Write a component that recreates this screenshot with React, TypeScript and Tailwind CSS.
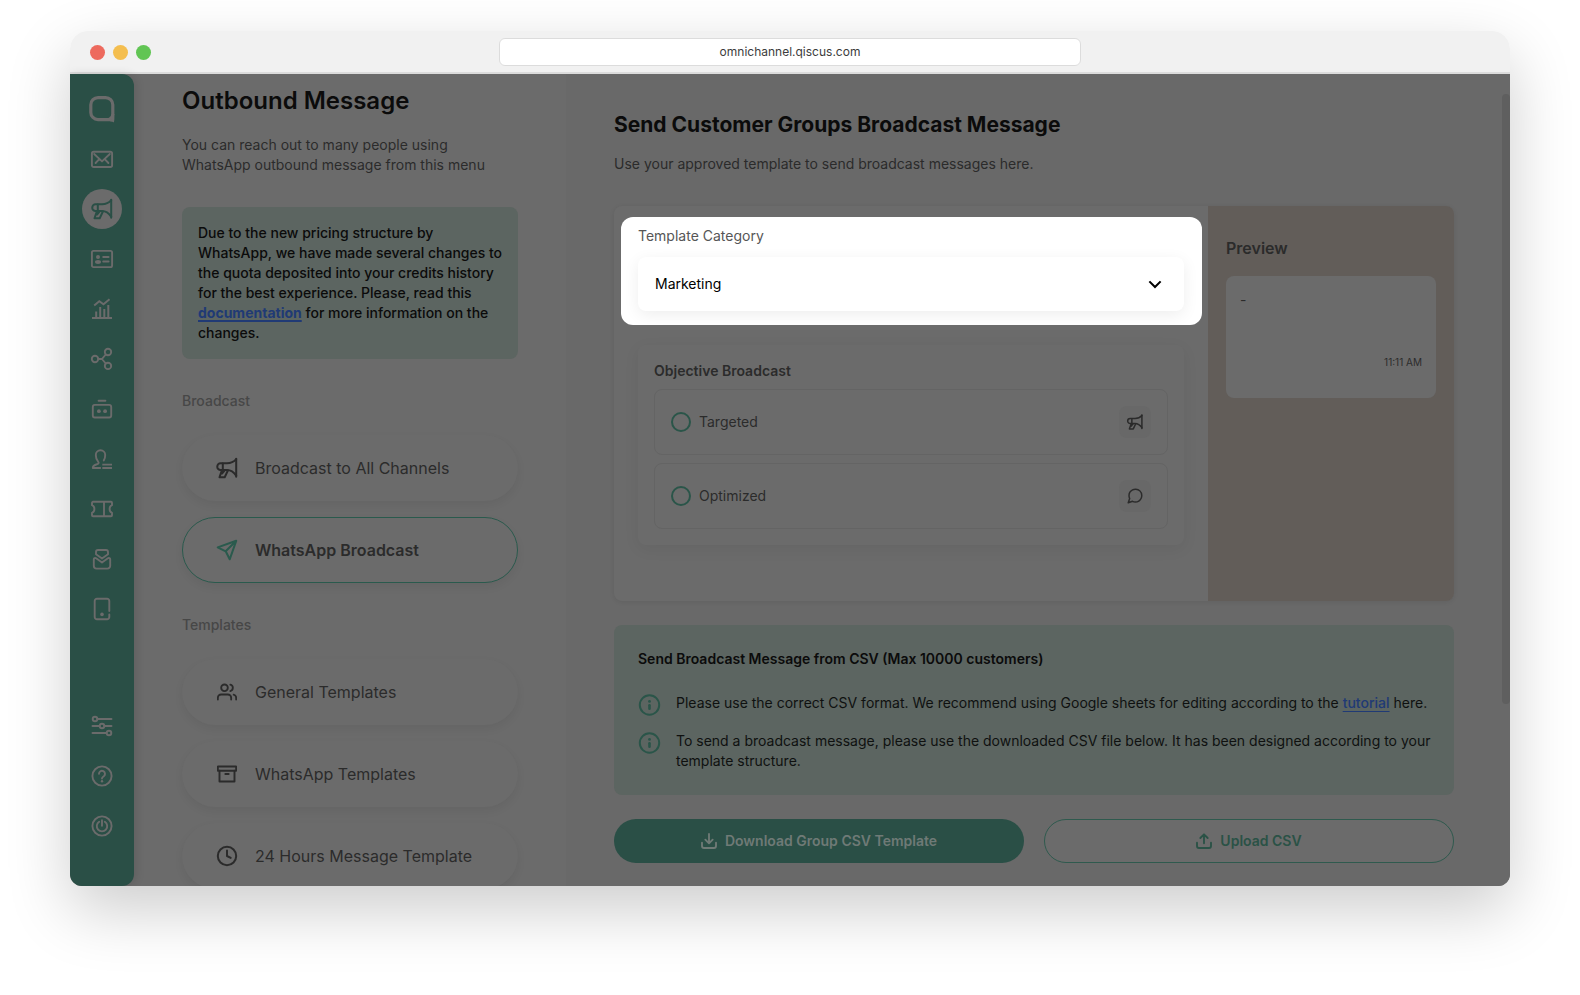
import React from "react";

type IconProps = { className?: string };

function Svg({
  className = "size-6",
  width = 1.9,
  children,
}: IconProps & { width?: number; children: React.ReactNode }) {
  return (
    <svg
      viewBox="0 0 24 24"
      fill="none"
      stroke="currentColor"
      strokeWidth={width}
      strokeLinecap="round"
      strokeLinejoin="round"
      aria-hidden="true"
      className={`shrink-0 ${className}`}
    >
      {children}
    </svg>
  );
}

const LogoIcon = () => (
  <svg viewBox="0 0 28 28" fill="none" stroke="currentColor" strokeWidth="3.2" className="size-7" aria-hidden="true">
    <path d="M24 24.600H10a7.200 7.200 0 0 1-7.200-7.200V9.800A7.200 7.200 0 0 1 10 2.600h7.600a7.200 7.200 0 0 1 7.200 7.200v10.400" />
    <path d="M26.400 19v4.600c0 1.500-.2 2.800-.6 4-1-.7-2-1-3.600-1l1.200-2.600c-.8-.9-1.800-1.500-3-1.800 1.600-.2 2.600-.9 3-3.200z" fill="currentColor" stroke="none" />
  </svg>
);

const InboxIcon = () => (
  <Svg>
    <rect x="1.900" y="4.800" width="20.200" height="15.200" rx="1.800" />
    <path d="M4.200 7 12 14.400 19.800 7M5.600 16 9 12.400M18.400 16 15 12.400" />
  </Svg>
);

const MegaphoneIcon = ({ className }: IconProps) => (
  <Svg className={className} width={2}>
    <path d="M21.200 2.700v18" />
    <path d="M21.200 3.200c-2.600 3-5.400 4.100-9.200 4.100H5.600a3.350 3.350 0 0 0 0 6.700H12c3.800 0 6.800 2 9.200 5.600" />
    <path d="M7.800 7.500v6.300M6.900 14.200 4.500 21.200h5.200l3.300-6.900M7 17.500l2.500-3" />
  </Svg>
);

const ContactIcon = () => (
  <Svg>
    <rect x="1.900" y="3.900" width="20.200" height="16.200" rx="1.600" />
    <circle cx="8" cy="9.900" r="2" fill="currentColor" stroke="none" />
    <ellipse cx="8" cy="15" rx="3" ry="1.900" fill="currentColor" stroke="none" />
    <path d="M13.200 10h5.400M13.200 14.500h5.400" />
  </Svg>
);

const ChartIcon = () => (
  <Svg width={2}>
    <path strokeLinecap="butt" d="M2 21h20M6.200 20.500v-6M10.200 20.500V10M14.300 20.500V12M18.300 20.500V8" />
    <path strokeLinecap="butt" strokeLinejoin="miter" d="M4.200 8.500 9.300 4.200l4.200 3L19.500 2.300" />
  </Svg>
);

const ShareIcon = () => (
  <Svg>
    <circle cx="5" cy="12" r="3.200" />
    <circle cx="18" cy="5" r="3.200" />
    <circle cx="18" cy="18.900" r="3.200" />
    <path d="M8.200 12H12l3.700-4.500M12 12l3.700 4.500" />
  </Svg>
);

const BotIcon = () => (
  <Svg>
    <rect x="2.800" y="7.900" width="18.400" height="12.600" rx="2" />
    <path d="M8.600 3.700h6.800" />
    <circle cx="8.900" cy="14.200" r="1.900" fill="currentColor" stroke="none" />
    <circle cx="15.100" cy="14.200" r="1.900" fill="currentColor" stroke="none" />
  </Svg>
);

const AgentIcon = () => (
  <Svg>
    <path d="M10.200 21H2.800c0-2.300.900-2.800 3.400-3.500 2.600-.7 3-1.600 1.900-2.800C6.500 13 5.800 11 5.800 8a4.700 4.700 0 0 1 9.400 0c0 2.200-.4 4-1.400 5.400" />
    <path strokeLinecap="butt" d="M12.300 17.600H22M12.300 21H22" />
  </Svg>
);

const TicketIcon = () => (
  <Svg>
    <path d="M3 4.800h18a1 1 0 0 1 1 1v2.400c-3.200 1.200-3.200 6.400 0 7.600v2.400a1 1 0 0 1-1 1H3a1 1 0 0 1-1-1v-2.400c3.200-1.200 3.200-6.400 0-7.600V5.800a1 1 0 0 1 1-1zM14 4.800v14.400" />
  </Svg>
);

const EnvelopeIcon = () => (
  <Svg>
    <path d="M8 3h8a2 2 0 0 1 2 2v2.200l-6 4.300-6-4.300V5a2 2 0 0 1 2-2z" />
    <path d="M6.600 21.600h10.800a2.800 2.800 0 0 0 2.800-2.800v-6.300c0-1.200-1.200-1.900-2.300-1.200L12 15.500l-5.900-4.200c-1.100-.7-2.300 0-2.300 1.200v6.300a2.800 2.800 0 0 0 2.800 2.800z" />
  </Svg>
);

const DeviceIcon = () => (
  <Svg>
    <path d="M19.300 14V3.900A2.200 2.200 0 0 0 17.100 1.700H6.900a2.200 2.200 0 0 0-2.200 2.200v16.200a2.200 2.200 0 0 0 2.200 2.200h10.200a2.200 2.200 0 0 0 2.200-2.200v-2.600" />
    <circle cx="12" cy="17.400" r="1.800" fill="currentColor" stroke="none" />
  </Svg>
);

const SlidersIcon = () => (
  <Svg>
    <circle cx="5" cy="5" r="2.300" />
    <circle cx="12" cy="12" r="2.300" />
    <circle cx="19" cy="19" r="2.300" />
    <path d="M7.500 5h14M2.500 12h7M14.500 12h7M2.500 19h14" />
  </Svg>
);

const HelpIcon = () => (
  <Svg>
    <circle cx="12" cy="12" r="9.600" />
    <path d="M9 9.800a3 3 0 1 1 4.800 2.400c-1.200.8-1.800 1.300-1.800 2.400" />
    <circle cx="12" cy="17.200" r="1.200" fill="currentColor" stroke="none" />
  </Svg>
);

const PowerIcon = () => (
  <Svg>
    <circle cx="12" cy="12" r="9.600" />
    <path d="M12 6.300v5.500M9.200 7.800a5.200 5.200 0 1 0 5.600 0" />
  </Svg>
);

const SendIcon = () => (
  <Svg width={2}>
    <path d="M21.200 2.800 2.700 9.400l8 3.900 4 8zM21.200 2.800 10.700 13.300" />
  </Svg>
);

const PeopleIcon = () => (
  <Svg className="m-0.5 size-5" width={2.2}>
    <path d="M17 21v-2a4 4 0 0 0-4-4H5a4 4 0 0 0-4 4v2" />
    <circle cx="9" cy="7" r="4" />
    <path d="M23 21v-2a4 4 0 0 0-3-3.870M16 3.130a4 4 0 0 1 0 7.750" />
  </Svg>
);

const ArchiveIcon = () => (
  <Svg className="m-0.5 size-5" width={2.300}>
    <path d="M21 8v13H3V8" />
    <rect x="1" y="3" width="22" height="5" />
    <path d="M10 12h4" />
  </Svg>
);

const ClockIcon = () => (
  <Svg width={2}>
    <circle cx="12" cy="12" r="9.200" />
    <path d="M12 6.500V12l3.700 1.900" />
  </Svg>
);

const ChatIcon = () => (
  <Svg className="size-[18px]" width={2}>
    <path d="M21 11.500a8.380 8.380 0 0 1-.9 3.800 8.500 8.500 0 0 1-7.600 4.700 8.380 8.380 0 0 1-3.800-.9L3 21l1.900-5.700a8.380 8.380 0 0 1-.9-3.800 8.500 8.500 0 0 1 4.700-7.600 8.380 8.380 0 0 1 3.800-.9h.5a8.480 8.480 0 0 1 8 8v.5z" />
  </Svg>
);

const InfoIcon = () => (
  <Svg className="size-6 text-[#2a5549]" width={2}>
    <circle cx="11.500" cy="12" r="9.700" />
    <path d="M11.500 12.300v3.400" strokeWidth="2.600" />
    <circle cx="11.500" cy="8.400" r="1.400" fill="currentColor" stroke="none" />
  </Svg>
);

const DownloadIcon = () => (
  <Svg className="size-4" width={2.800}>
    <path d="M1.500 14.500v5a3 3 0 0 0 3 3h15a3 3 0 0 0 3-3v-5M12 1.500v13.500M6.500 10l5.500 5.500 5.500-5.500" />
  </Svg>
);

const UploadIcon = () => (
  <Svg className="size-4" width={2.800}>
    <path d="M1.500 14.500v5a3 3 0 0 0 3 3h15a3 3 0 0 0 3-3v-5M12 15.500V2M6.500 7.500 12 2l5.500 5.500" />
  </Svg>
);

const railMain = [
  { label: "Inbox", icon: <InboxIcon /> },
  { label: "Outbound message", icon: <MegaphoneIcon />, active: true },
  { label: "Contacts", icon: <ContactIcon /> },
  { label: "Analytics", icon: <ChartIcon /> },
  { label: "Integration", icon: <ShareIcon /> },
  { label: "Bot", icon: <BotIcon /> },
  { label: "Agents", icon: <AgentIcon /> },
  { label: "Tickets", icon: <TicketIcon /> },
  { label: "Campaigns", icon: <EnvelopeIcon /> },
  { label: "Devices", icon: <DeviceIcon /> },
];

const railBottom = [
  { label: "Settings", icon: <SlidersIcon /> },
  { label: "Help", icon: <HelpIcon /> },
  { label: "Log out", icon: <PowerIcon /> },
];

function RailButton({ label, icon, active }: { label: string; icon: React.ReactNode; active?: boolean }) {
  return (
    <button
      type="button"
      aria-label={label}
      className={`flex size-10 shrink-0 items-center justify-center rounded-full ${
        active ? "bg-[#6b6b6b] text-[#2a4f46]" : "text-[#6b6b6b]"
      }`}
    >
      {icon}
    </button>
  );
}

function MenuCard({ icon, children, active }: { icon: React.ReactNode; children: string; active?: boolean }) {
  return (
    <button
      type="button"
      className={`flex h-[66px] w-full shrink-0 items-center gap-4 rounded-full border bg-[#6b6b6b] px-8 text-left text-base shadow-[0_4px_10px_rgba(0,0,0,0.06)] ${
        active ? "border-[#2a5a4d] font-semibold" : "border-transparent"
      }`}
    >
      <span className={active ? "text-[#2a5a4d]" : "text-[#2b2b2b]"}>{icon}</span>
      <span className="text-[#2b2b2b]">{children}</span>
    </button>
  );
}

function ObjectiveOption({ id, label, icon }: { id: string; label: string; icon: React.ReactNode }) {
  return (
    <div className="flex h-[66px] items-center gap-2 rounded-lg border border-[#646464] px-4">
      <input
        id={id}
        type="radio"
        name="objective"
        className="size-5 shrink-0 appearance-none rounded-full border-2 border-[#2a5549]"
      />
      <label htmlFor={id} className="flex-1 text-sm text-[#2b2b2b]">
        {label}
      </label>
      <span className="flex size-8 items-center justify-center rounded-lg bg-[#686868] text-[#2b2b2b]">{icon}</span>
    </div>
  );
}

export default function App() {
  return (
    <div className="flex h-screen min-h-[700px] bg-white px-[70px] pt-[31px] pb-[109px] font-['Inter',sans-serif]">
      <div className="flex min-w-0 flex-1 flex-col overflow-hidden rounded-t-[18px] rounded-b-xl shadow-[0_24px_64px_rgba(0,0,0,0.2)]">
        <header className="grid h-[43px] shrink-0 grid-cols-[1fr_582px_1fr] items-center border-b-2 border-[#dcdcdc] bg-[#f1f1f1]">
          <div className="flex gap-2 pt-0.5 pl-5">
            <span className="size-[15px] rounded-full bg-[#ed6a5e]" />
            <span className="size-[15px] rounded-full bg-[#f4be4f]" />
            <span className="size-[15px] rounded-full bg-[#61c554]" />
          </div>
          <input
            type="text"
            aria-label="Address"
            defaultValue="omnichannel.qiscus.com"
            className="h-7 rounded-md border border-[#dcdcdc] bg-white text-center text-xs text-[#3c3c3c]"
          />
        </header>

        <div className="flex min-h-0 flex-1 bg-[#6b6b6b]">
          <nav
            aria-label="Main"
            className="z-10 flex w-16 shrink-0 flex-col items-center gap-2.5 rounded-r-xl bg-[#2a4f46] pt-[15px] pb-10 shadow-[2px_0_10px_rgba(0,0,0,0.12)]"
          >
            <div className="flex size-10 shrink-0 items-center justify-center text-[#6b6b6b]">
              <LogoIcon />
            </div>
            {railMain.map((item) => (
              <RailButton key={item.label} {...item} />
            ))}
            <div className="mt-auto flex flex-col gap-2.5">
              {railBottom.map((item) => (
                <RailButton key={item.label} {...item} />
              ))}
            </div>
          </nav>

          <aside className="flex w-[432px] shrink-0 flex-col overflow-hidden px-12 pt-[11px]">
            <h1 className="text-2xl font-semibold text-[#0b0b0b]">Outbound Message</h1>
            <p className="mt-[18px] text-sm text-[#2b2b2b]">
              You can reach out to many people using WhatsApp outbound message from this menu
            </p>
            <p className="mt-8 rounded-lg bg-[#5c6561] py-4 pr-3 pl-4 text-sm font-medium text-[#0b0b0b]">
              Due to the new pricing structure by WhatsApp, we have made several changes to the quota deposited into
              your credits history for the best experience. Please, read this{" "}
              <a
                href="#documentation"
                className="font-bold text-[#203a75] underline decoration-2 underline-offset-2"
              >
                documentation
              </a>{" "}
              for more information on the changes.
            </p>

            <h2 className="mt-8 text-sm font-medium text-[#474747]">Broadcast</h2>
            <div className="mt-6 flex flex-col gap-4">
              <MenuCard icon={<MegaphoneIcon />}>Broadcast to All Channels</MenuCard>
              <MenuCard icon={<SendIcon />} active>
                WhatsApp Broadcast
              </MenuCard>
            </div>

            <h2 className="mt-8 text-sm font-medium text-[#474747]">Templates</h2>
            <div className="mt-6 flex flex-col gap-4">
              <MenuCard icon={<PeopleIcon />}>General Templates</MenuCard>
              <MenuCard icon={<ArchiveIcon />}>WhatsApp Templates</MenuCard>
              <MenuCard icon={<ClockIcon />}>24 Hours Message Template</MenuCard>
            </div>
          </aside>

          <main className="flex min-w-0 flex-1 overflow-hidden bg-[#696969] pl-12">
            <div className="min-w-0 flex-1 pt-[37px]">
              <h2 className="text-[21px] leading-7 font-bold text-[#0b0b0b]">
                Send Customer Groups Broadcast Message
              </h2>
              <p className="mt-[15px] text-sm text-[#2b2b2b]">
                Use your approved template to send broadcast messages here.
              </p>

              <section className="mt-8 flex rounded-lg bg-[#6b6b6b] shadow-[0_1px_5px_rgba(0,0,0,0.08)]">
                <div className="min-w-0 flex-1 pt-[11px] pr-1.5 pb-14 pl-[7px]">
                  <div className="overflow-hidden rounded-xl bg-white pt-[9px] pr-[18px] pb-[14px] pl-[17px]">
                    <label htmlFor="category" className="block text-sm text-[#565656]">
                      Template Category
                    </label>
                    <div className="relative mt-[11px]">
                      <select
                        id="category"
                        defaultValue="Marketing"
                        className="h-[54px] w-full appearance-none rounded-lg bg-white px-[17px] text-sm text-black shadow-[0_4px_16px_rgba(0,0,0,0.07)]"
                      >
                        <option>Marketing</option>
                        <option>Utility</option>
                        <option>Authentication</option>
                      </select>
                      <Svg className="pointer-events-none absolute top-[18px] right-5 size-[18px]" width={2.8}>
                        <path strokeLinecap="butt" strokeLinejoin="miter" d="m4.500 8.500 7.500 7.500 7.500-7.500" />
                      </Svg>
                    </div>
                  </div>

                  <fieldset className="mt-5 mr-[18px] ml-[17px] rounded-lg p-4 shadow-[0_4px_16px_rgba(0,0,0,0.06)]">
                    <legend className="float-left w-full text-sm font-semibold text-[#2b2b2b]">
                      Objective Broadcast
                    </legend>
                    <div className="clear-both flex flex-col gap-2 pt-2">
                      <ObjectiveOption
                        id="targeted"
                        label="Targeted"
                        icon={<MegaphoneIcon className="size-[18px]" />}
                      />
                      <ObjectiveOption id="optimized" label="Optimized" icon={<ChatIcon />} />
                    </div>
                  </fieldset>
                </div>

                <div className="w-[246px] shrink-0 rounded-r-lg bg-[#625d59] px-[18px] pt-[30px]">
                  <h3 className="text-base font-semibold text-[#2b2b2b]">Preview</h3>
                  <div className="mt-4 flex h-[122px] flex-col justify-between rounded-lg bg-[#6b6b6b] px-[14px] pt-[14px] pb-7 text-[#2b2b2b]">
                    <p className="text-sm">-</p>
                    <time className="text-right text-[10px] leading-4">11:11 AM</time>
                  </div>
                </div>
              </section>

              <section className="mt-6 rounded-lg bg-[#5c6561] p-6 text-sm text-[#0f1110]">
                <h3 className="font-semibold text-[#0b0b0b]">
                  Send Broadcast Message from CSV (Max 10000 customers)
                </h3>
                <ul className="-mr-2 mt-6 flex flex-col gap-[14px]">
                  <li className="flex gap-[14px]">
                    <InfoIcon />
                    <p>
                      Please use the correct CSV format. We recommend using Google sheets for editing according to the{" "}
                      <a href="#tutorial" className="font-medium text-[#203a75] underline underline-offset-3">
                        tutorial
                      </a>{" "}
                      here.
                    </p>
                  </li>
                  <li className="flex gap-[14px]">
                    <InfoIcon />
                    <p>
                      To send a broadcast message, please use the downloaded CSV file below. It has been designed
                      according to your template structure.
                    </p>
                  </li>
                </ul>
              </section>

              <div className="mt-6 grid grid-cols-2 gap-5 text-sm font-semibold">
                <button
                  type="button"
                  className="flex h-11 items-center justify-center gap-2 rounded-full bg-[#2a4f46] text-[#6f7a76]"
                >
                  <DownloadIcon />
                  Download Group CSV Template
                </button>
                <button
                  type="button"
                  className="flex h-11 items-center justify-center gap-2 rounded-full border border-[#2f5a4e] bg-[#6b6b6b] text-[#2a5246]"
                >
                  <UploadIcon />
                  Upload CSV
                </button>
              </div>
            </div>
            <div className="ml-12 w-2 shrink-0 pt-5">
              <div className="h-[77%] rounded-full bg-[#5f5f5f]" />
            </div>
          </main>
        </div>
      </div>
    </div>
  );
}
